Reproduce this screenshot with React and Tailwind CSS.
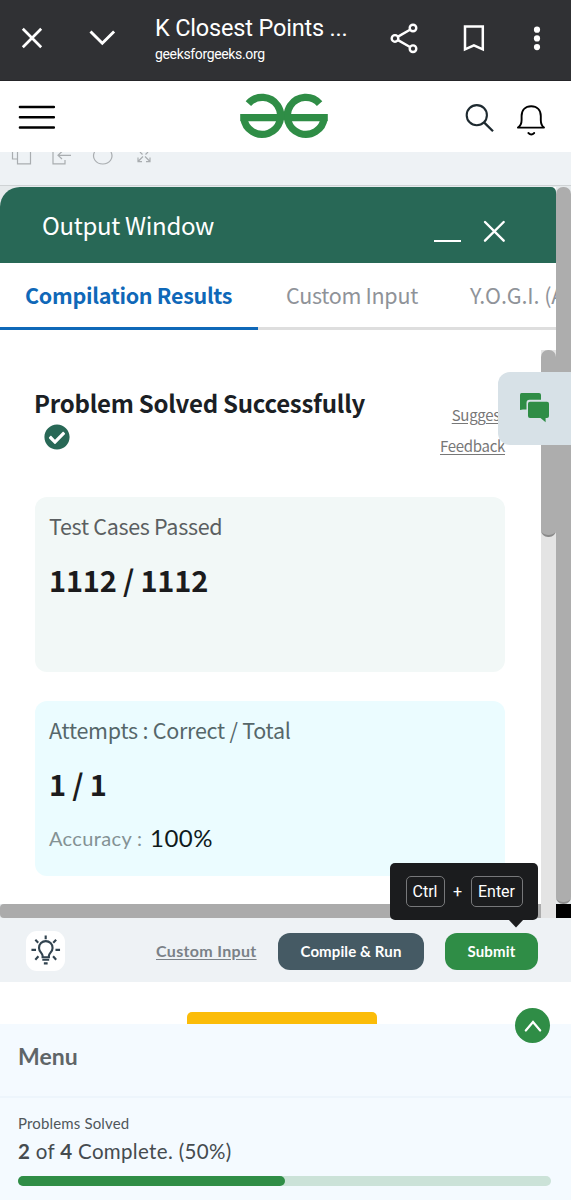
import React from 'react';
import { FaCheckCircle } from 'react-icons/fa';

const sans = "font-['Noto_Sans_CJK_SC','Noto_Sans',sans-serif]";
const round = "font-['Lato','Open_Sans',sans-serif]";
const roboto = "font-['Roboto','Liberation_Sans',sans-serif]";

const Logo = () => (
    <svg className="ml-[184px] shrink-0" width="88" height="46" viewBox="240 93 88 46" fill="none" stroke="#2f8d46" strokeWidth="7.2">
        <path d="M319.6 103.6A18.5 18.5 0 1 0 324.2 117.6M287 117.6H327.8" />
        <path d="M248.4 103.6A18.5 18.5 0 1 1 243.8 117.6M281 117.6H240.2" />
    </svg>
);

const BrowserBar = () => (
    <header className={`flex h-[81px] items-start bg-[#303134] border-b border-[#252529] text-white ${roboto}`}>
        <svg className="ml-[21px] mt-[27px]" width="22" height="22" viewBox="0 0 22 22" fill="none" stroke="currentColor" strokeWidth="2.7">
            <path d="M1.8 1.8L20.2 20.2M20.2 1.8L1.8 20.2" />
        </svg>
        <svg className="ml-[46px] mt-[29px]" width="27" height="18" viewBox="0 0 27 18" fill="none" stroke="currentColor" strokeWidth="2.9">
            <path d="M1.5 2.5L13.3 14.3L25.1 2.5" />
        </svg>
        <div className="ml-[39px] mt-[14px] w-[210px] whitespace-nowrap">
            <div className="text-[23.5px] leading-[29px] tracking-[-0.18px]">K Closest Points ...</div>
            <div className="mt-[3px] text-[14px] leading-[17px] tracking-[-0.35px]">geeksforgeeks.org</div>
        </div>
        <svg className="ml-[25px] mt-[23px]" width="28" height="31" viewBox="0 0 28 31" fill="none" stroke="currentColor" strokeWidth="2.4">
            <circle cx="23" cy="5" r="3.3" />
            <circle cx="5" cy="15.4" r="3.3" />
            <circle cx="23" cy="25.7" r="3.3" />
            <path d="M8 13.6L20 6.7M8 17.1L20 24" />
        </svg>
        <svg className="ml-[45px] mt-[25px]" width="22" height="27" viewBox="0 0 22 27" fill="none" stroke="currentColor" strokeWidth="2.5">
            <path d="M2 1.5H19.8V24.3L10.9 20.3L2 24.3Z" />
        </svg>
        <svg className="ml-[48px] mt-[26px]" width="8" height="26" viewBox="0 0 8 26" fill="currentColor">
            <circle cx="4" cy="3.7" r="3.1" />
            <circle cx="4" cy="12.4" r="3.1" />
            <circle cx="4" cy="21.1" r="3.1" />
        </svg>
    </header>
);

const SiteNav = () => (
    <nav className="flex h-[71px] items-start bg-white pt-[12px]">
        <svg className="ml-[18px] mt-[11px]" width="38" height="28" viewBox="0 0 38 28" stroke="#000" strokeWidth="2.4" strokeLinecap="round">
            <path d="M1.9 3H35.9M1.9 13.3H35.9M1.9 23.5H35.9" />
        </svg>
        <Logo />
        <svg className="ml-[137px] mt-[11px]" width="30" height="30" viewBox="465 104 30 30" fill="none" stroke="#1e2a30" strokeWidth="2.1">
            <circle cx="476.8" cy="115.2" r="10.1" />
            <path d="M484 122.4L493 131.3" strokeWidth="2.3" />
        </svg>
        <svg className="ml-[22px] mt-[11px]" width="29" height="33" viewBox="517 104 29 33" fill="none" stroke="#000" strokeWidth="1.9" strokeLinecap="round" strokeLinejoin="round">
            <path d="M518 127.6H544C541.8 126 540.8 124 540.8 120V116C540.8 110 537 106.2 531.2 106.2S521.6 110 521.6 116V120C521.6 124 520.4 126 518 127.6Z" />
            <path d="M528.4 133Q531.3 136 534.2 133" />
        </svg>
    </nav>
);

const EditorToolbar = () => (
    <div className="h-[34px] border-b border-[#cfd3d5] bg-[#eef2f5]">
        <svg className="ml-[8px]" width="150" height="16" viewBox="8 152 150 16" fill="none" stroke="#a9adb0" strokeWidth="1.2">
            <path d="M17.5 152V163.8H30.5V152M12.5 152V159H17M53 152V163.8H65V160M71 155.3H58M62 151.5L58 155.3L62 159" />
            <path d="M94.5 152C91.5 158 96 164 102.8 164S114 158 111 152" />
            <path d="M138 161.5L143 156.5M150 161.5L145 156.5M138 157.5V161.7H142M150 157.5V161.7H146M140 152L142.5 154.5M148 152L145.5 154.5" />
        </svg>
    </div>
);

const OutputHeader = () => (
    <div className="flex h-[76px] items-start rounded-tl-[20px] rounded-tr-[5px] bg-[#286856] text-white">
        <h2 className={`ml-[42px] mt-[21px] w-[392px] text-[24px] leading-[34px] tracking-[-0.32px] ${sans}`}>Output Window</h2>
        <div className="mt-[53px] h-[2px] w-[27px] bg-white" />
        <svg className="ml-[22px] mt-[33px]" width="23" height="23" viewBox="0 0 23 23" stroke="currentColor" strokeWidth="2.4" strokeLinecap="round">
            <path d="M2 2L20.7 20.7M20.7 2L2 20.7" />
        </svg>
    </div>
);

const Tabs = () => (
    <div className={`flex h-[67px] overflow-hidden whitespace-nowrap text-[21.5px] leading-[63px] tracking-[-0.3px] text-[#8f9399] ${sans}`}>
        <div className="w-[258px] shrink-0 border-b-[3px] border-[#0f68b8] pl-[25px] font-bold text-[#0f68b8]">Compilation Results</div>
        <div className="w-[212px] shrink-0 border-b-[3px] border-[#dedede] pl-[28px]">Custom Input</div>
        <div className="w-[86px] shrink-0 border-b-[3px] border-[#dedede] tracking-[-0.1px]">Y.O.G.I. (AI Bot)</div>
    </div>
);

const Results = () => (
    <div className={`w-[541px] pl-[35px] ${sans}`}>
        <div className="flex h-[167px]">
            <div className="mt-[55px] w-[375px] whitespace-nowrap">
                <h3 className="-ml-px text-[24px] font-bold leading-[36px] tracking-[-0.25px] text-[#1b1f25]">Problem Solved Successfully</h3>
                <FaCheckCircle className="ml-[9px] mt-[3px] text-[#286856]" size={26} />
            </div>
            <div className="mt-[69px] w-[95px] whitespace-nowrap text-right text-[15px] leading-[31px] tracking-[-0.3px] text-[#777777] underline underline-offset-2">
                <div>Suggest</div>
                <div>Feedback</div>
            </div>
        </div>
        <div className="h-[175px] w-[470px] rounded-[12px] bg-[#f2f8f7] pl-[14px] pt-[13px]">
            <div className="text-[21.5px] leading-[32px] tracking-[-0.3px] text-[#5b5f61]">Test Cases Passed</div>
            <div className="mt-[16px] text-[29px] font-bold leading-[42px] tracking-[-0.2px] text-[#1b1b1d]">1112 / 1112</div>
        </div>
        <div className="mt-[29px] h-[175px] w-[470px] rounded-[12px] bg-[#ebfcff] pl-[14px] pt-[13px]">
            <div className="text-[21.5px] leading-[32px] tracking-[-0.25px] text-[#56676a]">Attempts : Correct / Total</div>
            <div className="mt-[16px] text-[29px] font-bold leading-[42px] tracking-[-0.2px] text-[#1b1b1d]">1 / 1</div>
            <div className={`mt-[16px] flex items-center leading-[36px] ${round}`}>
                <span className="w-[101px] text-[20px] tracking-[0.35px] text-[#849194]">Accuracy :</span>
                <span className="text-[24px] tracking-[0.5px] text-[#101a1c]">100%</span>
            </div>
        </div>
    </div>
);

const OutputPanel = () => (
    <section className="bg-[#e6eaec] pt-[1px]">
        <div className="flex h-[717px]">
            <div className="w-[556px] rounded-tl-[20px] bg-white">
                <OutputHeader />
                <Tabs />
                <div className="flex h-[574px]">
                    <Results />
                    <div className="mt-[20px] w-[15px] bg-[#e4e4e4]">
                        <div className="h-[187px] rounded-[7px] border-b-2 border-[#8a8a8a] bg-[#adadad]" />
                    </div>
                </div>
            </div>
            <div className="w-[15px] rounded-[7px] border-b-2 border-[#8e8e8e] bg-[#adadad]" />
        </div>
        <div className="flex h-[14px]">
            <div className="w-[541px] rounded-l-[4px] bg-[#ababab]" />
            <div className="w-[15px] bg-[#e4e4e4]" />
            <div className="w-[15px] bg-black" />
        </div>
    </section>
);

const ShortcutTip = () => (
    <div className={`absolute -top-[55px] left-[390px] flex h-[57px] w-[148px] items-center justify-center rounded-[5px] bg-[#1b1c1e] text-[16px] font-normal text-white ${roboto}`}>
        <kbd className={`flex h-[31px] w-[39px] items-center justify-center rounded-[5px] border border-[#77787a] ${roboto}`}>Ctrl</kbd>
        <span className="w-[26px] text-center">+</span>
        <kbd className={`flex h-[31px] w-[52px] items-center justify-center rounded-[5px] border border-[#77787a] ${roboto}`}>Enter</kbd>
        <svg className="absolute left-[118px] top-[56px]" width="16" height="9" viewBox="0 0 16 9" fill="#1b1c1e">
            <path d="M0 0H16L8 8.5Z" />
        </svg>
    </div>
);

const ActionBar = () => (
    <div className={`relative flex h-[64px] items-center whitespace-nowrap bg-[#eef2f5] pt-[2px] text-[16px] font-bold ${round}`}>
        <div className="ml-[26px] flex h-[40px] w-[39px] items-center justify-center rounded-[11px] bg-white">
            <svg className="-ml-px -mt-[2px]" width="31" height="31" viewBox="0 0 32 32" fill="none" stroke="#31434f" strokeWidth="2.2">
                <path d="M13 23V21.5C13 18.5 9.3 17.5 9.3 13.3A7 7 0 0 1 23.3 13.3C23.3 17.5 19.5 18.5 19.5 21.5V23Z" />
                <path d="M12.7 25.6H19.8M14.3 29.3H18.2M16.2 0.5V4.5M5.5 5L8.5 8M27 5L24 8M1.5 15.3H6.2M26.3 15.3H31M5.5 25.5L8.7 22M27 25.5L23.8 22" />
            </svg>
        </div>
        <a className="ml-[91px] w-[122px] tracking-[0.33px] text-[#7a8187] underline underline-offset-2">Custom Input</a>
        <button className="h-[37px] w-[146px] rounded-[12px] bg-[#455a64] text-[15px] tracking-[0.12px] text-white">Compile &amp; Run</button>
        <button className="ml-[21px] h-[37px] w-[93px] rounded-[12px] bg-[#2f8d46] text-[15px] tracking-[0.2px] text-white">Submit</button>
        <ShortcutTip />
    </div>
);

const MenuSheet = () => (
    <section className={`h-[176px] bg-[#f4faff] ${round}`}>
        <div className="h-[74px] border-b-2 border-[#edf5fc] pl-[18px] pt-[16px] text-[23px] font-bold leading-[32px] text-[#5f6568]">Menu</div>
        <div className="pl-[18px] pt-[15px]">
            <div className="text-[15px] leading-[20px] tracking-[0.15px] text-[#50575b]">Problems Solved</div>
            <div className="mt-[4px] text-[20.5px] leading-[28px] tracking-[0.33px] text-[#454b4f]"><b>2</b> of <b>4</b> Complete. (50%)</div>
            <div className="mt-[11px] h-[10px] w-[533px] rounded-full bg-[#cbe2d8]">
                <div className="h-full w-1/2 rounded-full bg-[#2f8d46]" />
            </div>
        </div>
    </section>
);

export default function App() {
    return (
        <div className="relative h-[1200px] w-[571px] overflow-hidden bg-white">
            <BrowserBar />
            <SiteNav />
            <EditorToolbar />
            <OutputPanel />
            <ActionBar />
            <div className="h-[42px] bg-white pt-[30px]">
                <div className="ml-[187px] h-[12px] w-[190px] rounded-t-[5px] bg-[#fbbc09]" />
            </div>
            <MenuSheet />

            {/* floating feedback chat */}
            <div className="absolute left-[498px] top-[372px] h-[73px] w-[73px] rounded-l-[12px] bg-[#d7e1e7]">
                <svg className="ml-[21px] mt-[20px]" width="31" height="31" viewBox="0 0 31 31" fill="#2f8d46">
                    <path d="M2.5 1H20Q22 1 22 3V7.8H10.5Q7.5 7.8 7.5 11V17.5H4L1 18V3Q1 1 2.5 1Z" />
                    <path d="M11 9.7H28Q30 9.7 30 11.7V24Q30 26 28 26H26.6V30.3L21.5 26H11Q9 26 9 24V11.7Q9 9.7 11 9.7Z" />
                </svg>
            </div>
            {/* scroll to top */}
            <button className="absolute left-[515px] top-[1008px] flex h-[35px] w-[35px] items-center justify-center rounded-full bg-[#2f8d46]">
                <svg width="18" height="14" viewBox="0 0 18 14" fill="none" stroke="#fff" strokeWidth="2.2" strokeLinecap="round">
                    <path d="M1.8 11.5L9 3L16.2 11.5" />
                </svg>
            </button>
        </div>
    );
}
